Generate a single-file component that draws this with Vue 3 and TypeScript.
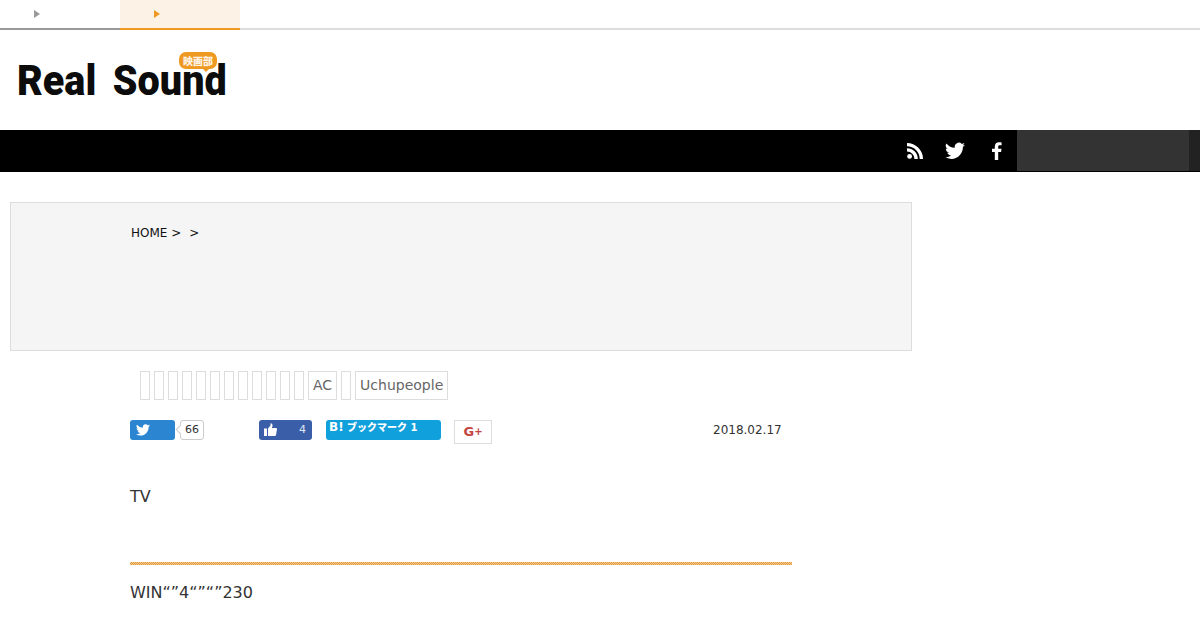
<script setup lang="ts">
const blanks: number[] = Array.from({ length: 12 }, (_, i) => i)
</script>

<template>
  <div class="page">
    <div class="tabs">
      <div class="tab"><span class="arrow"></span></div>
      <div class="tab on"><span class="arrow"></span></div>
    </div>
    <header class="head">
      <div class="logo">
        <div class="words"><span>Real</span><span>Sound</span></div>
        <span class="badge">映画部</span>
      </div>
    </header>
    <nav class="nav">
      <svg class="ico rss" width="18" height="18" viewBox="0 0 18 18" fill="#fff">
        <circle cx="3.6" cy="14.4" r="2.4" />
        <path d="M1 6.2v3.3a7.5 7.5 0 0 1 7.5 7.5h3.3A10.8 10.8 0 0 0 1 6.2z" />
        <path d="M1 1v3.3A12.7 12.7 0 0 1 13.7 17H17A16 16 0 0 0 1 1z" />
      </svg>
      <svg class="ico tw" width="20" height="18" viewBox="0 0 24 20" fill="#fff">
        <path d="M24 2.400a9.800 9.800 0 0 1-2.800.8A4.900 4.900 0 0 0 23.300.5a9.800 9.800 0 0 1-3.100 1.200 4.900 4.900 0 0 0-8.400 4.500A14 14 0 0 1 1.700.9a4.900 4.900 0 0 0 1.500 6.600 4.900 4.900 0 0 1-2.200-.6v.1a4.900 4.900 0 0 0 3.900 4.800 4.900 4.900 0 0 1-2.200.1 4.900 4.900 0 0 0 4.600 3.400A9.900 9.900 0 0 1 0 17.300 14 14 0 0 0 7.500 19.500c9.100 0 14-7.500 14-14v-.6A10 10 0 0 0 24 2.400z" />
      </svg>
      <svg class="ico fb" width="11" height="18" viewBox="0 0 11 18" fill="#fff">
        <path d="M7.200 18V10h2.900l.4-3.200H7.200V4.800c0-.9.300-1.500 1.600-1.500h1.800V.4C10.300.300 9.200.200 8 .200 5.500.200 3.800 1.700 3.800 4.500v2.300H1V10h2.800v8z" />
      </svg>
      <div class="search"></div>
      <div class="search-btn"></div>
    </nav>
    <main class="main">
      <section class="crumb">
        <span>HOME &gt;</span><span class="sep">&gt;</span>
      </section>
      <div class="content">
        <div class="tags">
          <span v-for="b in blanks" :key="b" class="tag blank"></span>
          <span class="tag">AC</span>
          <span class="tag blank"></span>
          <span class="tag">Uchupeople</span>
        </div>
        <div class="share">
          <div class="btn twb">
            <svg width="14" height="12" viewBox="0 0 24 20" fill="#fff">
              <path d="M24 2.400a9.800 9.800 0 0 1-2.800.8A4.900 4.900 0 0 0 23.300.5a9.800 9.800 0 0 1-3.100 1.200 4.900 4.900 0 0 0-8.400 4.500A14 14 0 0 1 1.700.9a4.900 4.900 0 0 0 1.500 6.600 4.900 4.900 0 0 1-2.200-.6v.1a4.900 4.900 0 0 0 3.900 4.800 4.900 4.900 0 0 1-2.200.1 4.900 4.900 0 0 0 4.600 3.400A9.900 9.900 0 0 1 0 17.300 14 14 0 0 0 7.500 19.500c9.100 0 14-7.500 14-14v-.6A10 10 0 0 0 24 2.400z" />
            </svg>
          </div>
          <div class="count">66</div>
          <div class="btn fbb">
            <svg width="13" height="13" viewBox="0 0 13 13" fill="#fff">
              <rect x="0" y="5.500" width="3" height="7.500" />
              <path d="M4 5.500 6.500 2.500V0.300c1.300 0 2 .9 2 2.100 0 .9-.3 1.800-.6 2.600h4c.7 0 1.100.5 1.100 1.100l-1 5.900c-.1.600-.5 1-1.100 1H4z" />
            </svg>
            <span>4</span>
          </div>
          <div class="btn hb"><b>B!</b> ブックマーク 1</div>
          <div class="gplus">G<sup>+</sup></div>
          <time class="date">2018.02.17</time>
        </div>
        <p class="lead">TV</p>
        <div class="rule"></div>
        <p class="body">WIN“”4“”“”230</p>
      </div>
    </main>
  </div>
</template>

<style>
html, body { margin: 0; background: #fff; }
</style>

<style scoped>
.page { width: 1200px; height: 630px; overflow: hidden; font-family: "DejaVu Sans", sans-serif; color: #333; }
.tabs { display: flex; height: 28px; border-bottom: 2px solid #ddd; }
.tab { width: 120px; height: 30px; box-sizing: border-box; border-bottom: 2px solid #999; display: flex; align-items: center; justify-content: center; padding-right: 46px; }
.arrow { width: 0; height: 0; border-left: 6px solid #999; border-top: 4px solid transparent; border-bottom: 4px solid transparent; }
.tab.on { background: #fcf3e6; border-bottom-color: #ee9a22; }
.tab.on .arrow { border-left-color: #ee9a22; }
.head { height: 100px; padding: 27px 0 0 17px; box-sizing: border-box; }
.logo { position: relative; width: 210px; height: 46px; }
.words { display: flex; gap: 18px; width: 240px; transform: scaleX(0.92); transform-origin: left; font-family: "Roboto", "Liberation Sans", sans-serif; font-weight: 900; font-size: 43px; line-height: 46px; color: #0c0c0c; }
.badge { position: absolute; left: 162px; top: -5px; background: #ee9a22; color: #fdf3e6; font-family: "Noto Sans CJK JP", sans-serif; font-size: 10px; font-weight: 900; line-height: 17px; padding: 0 4px; border-radius: 7px; }
.badge::after { content: ""; position: absolute; left: 24px; bottom: -3px; border-top: 3px solid #ee9a22; border-left: 3px solid transparent; border-right: 3px solid transparent; }
.nav { height: 42px; background: #000; display: flex; align-items: center; }
.ico { flex: none; }
.rss { margin-left: 906px; }
.tw { margin-left: 21px; }
.fb { margin-left: 26px; margin-right: 15px; }
.search { width: 172px; height: 41px; background: #333; align-self: flex-start; }
.search-btn { width: 11px; height: 41px; background: #222; align-self: flex-start; }
.main { padding: 30px 0 0 10px; font-size: 12px; }
.crumb { width: 902px; height: 149px; border: 1px solid #ddd; background: #f5f5f5; padding: 22px 0 0 120px; box-sizing: border-box; color: #111; line-height: 16px; }
.sep { margin-left: 8px; }
.content { padding-left: 120px; }
.tags { display: flex; gap: 4px; padding: 20px 0 0 10px; }
.tag { height: 29px; border: 1px solid #ddd; padding: 0 4px; line-height: 27px; font-size: 14px; color: #666; box-sizing: border-box; }
.blank { width: 10px; padding: 0; }
.share { display: flex; align-items: flex-start; margin-top: 20px; height: 24px; font-size: 12px; }
.btn { height: 20px; border-radius: 3px; color: #fff; box-sizing: border-box; }
.twb { width: 45px; background: #2b85d1; padding: 4px 0 0 6px; }
.count { position: relative; margin-left: 5px; width: 24px; height: 20px; border: 1px solid #ccc; border-radius: 3px; box-sizing: border-box; font-size: 11px; line-height: 18px; text-align: center; }
.count::before { content: ""; position: absolute; left: -4px; top: 5px; width: 6px; height: 6px; background: #fff; border-left: 1px solid #ccc; border-bottom: 1px solid #ccc; transform: rotate(45deg); }
.fbb { margin-left: 55px; width: 53px; background: #3b5ea8; padding: 3px 6px 0 5px; display: flex; justify-content: space-between; font-size: 11px; line-height: 14px; color: #dfe5f2; }
.hb { margin-left: 14px; width: 115px; background: #10a0dc; font-size: 10px; font-weight: 900; line-height: 14px; padding-left: 3px; font-family: "DejaVu Sans", "Noto Sans CJK JP", sans-serif; }
.hb b { font-size: 12px; }
.gplus { margin-left: 13px; width: 38px; height: 24px; border: 1px solid #ddd; box-sizing: border-box; color: #c4453f; font-size: 13px; font-weight: 700; line-height: 22px; text-align: center; }
.gplus sup { font-size: 10px; line-height: 0; vertical-align: 1px; }
.date { margin-left: 221px; line-height: 20px; font-size: 12px; color: #333; }
.lead { margin: 0; padding-top: 41px; font-size: 16px; line-height: 24px; }
.rule { margin-top: 53px; width: 662px; height: 3px; background: repeating-conic-gradient(#e59a3a 0 25%, #f2c88f 0 50%) 0 0 / 2px 2px; }
.body { margin: 0; padding-top: 16px; font-size: 16px; line-height: 24px; }
</style>
